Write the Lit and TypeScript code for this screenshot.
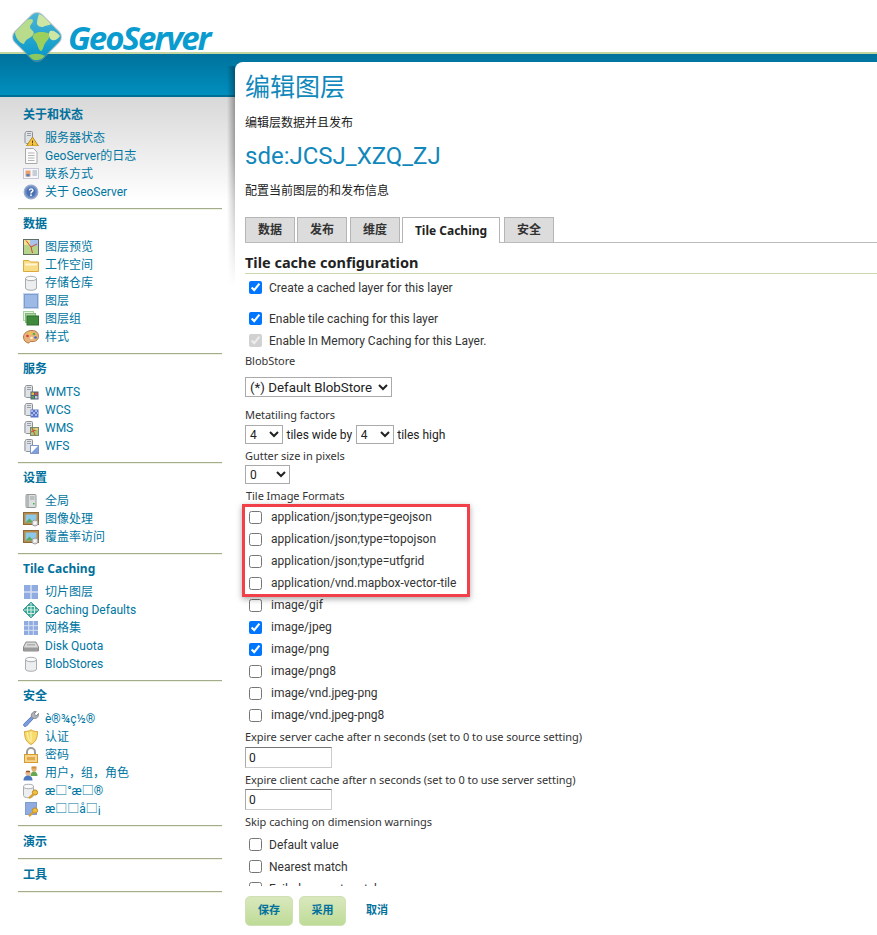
import { LitElement, html, css, svg } from "lit";
import { customElement } from "lit/decorators.js";

const srv = svg`<rect x="2.5" y="1.5" width="7" height="12" rx="1" fill="#dfe2e6" stroke="#8d9196"/><path d="M4 3.5h4M4 5.5h4" stroke="#9aa0a6"/><rect x="1" y="3" width="2" height="10" fill="#b8bcc0"/>`;
const key = svg`<circle cx="12" cy="9.5" r="2.6" fill="#f0c040" stroke="#c08a20"/><path d="M10.5 11L6 15.2" stroke="#d9a02c" stroke-width="2.2"/>`;
const I: Record<string, any> = {
  status: svg`${srv}<path d="M9.500 7l6 9H3.500z" fill="#f5c542" stroke="#b98a25"/><path d="M9.500 10.500v2.800M9.500 14.200v.9" stroke="#5a4210"/>`,
  doc: svg`<path d="M2.500.5h8l3.500 3.500v11.500H2.500z" fill="#fbfbfb" stroke="#a8a8a8"/><path d="M5 5h6.500M5 7.500h6.500M5 10h6.500M5 12.500h6.500" stroke="#b5b5b5"/>`,
  card: svg`<rect x=".5" y="2.500" width="15" height="10" fill="#f7f7fb" stroke="#c4c8d6"/><rect x="2.500" y="4.500" width="5" height="6" fill="#e8a070"/><rect x="3.500" y="8" width="3" height="2.500" fill="#4f7fc0"/><path d="M9.500 5h4.500M9.500 7h4.500M9.500 9h4.500" stroke="#9aa2b4"/>`,
  help: svg`<circle cx="8" cy="8" r="6.800" fill="#6d8fc9" stroke="#97a9cc" stroke-width="1.200"/><circle cx="8" cy="8" r="4.600" fill="#4a70b2"/><path d="M6.300 6.400c.3-2 3.600-2 3.600 0 0 1.300-1.900 1.300-1.900 3" fill="none" stroke="#fff" stroke-width="1.400"/><rect x="7.200" y="10.400" width="1.600" height="1.600" fill="#fff"/>`,
  preview: svg`<rect x=".5" y=".5" width="15" height="15" fill="#b6d48a" stroke="#5f6e62"/><rect x="7" y="1" width="8" height="6" fill="#a8c4ec"/><rect x="1" y="1" width="6" height="5" fill="#f0e090"/><path d="M3 1.500l5 6.500 1.500 6M8 8l6-3" stroke="#d5482c" fill="none"/>`,
  folder: svg`<path d="M.5 3.500h5.500l1.500 1.500h8v9.500H.5z" fill="#f8dc86" stroke="#dba93c"/><path d="M2 6.500h12v2H2z" fill="#fff6d4"/>`,
  db: svg`<path d="M2.500 3.500v9.500c0 3 11 3 11 0V3.500z" fill="#eceef0" stroke="#a9acb0"/><ellipse cx="8" cy="3.500" rx="5.500" ry="2.200" fill="#fafafa" stroke="#a9acb0"/>`,
  layer: svg`<rect x="1.500" y="1.500" width="13" height="13" fill="#9db9e6" stroke="#7f9ccf"/><rect x=".5" y=".5" width="15" height="15" fill="none" stroke="#c5d4ee"/>`,
  group: svg`<rect x=".5" y=".5" width="10" height="9" fill="#e4f2de" stroke="#a9d0a0"/><rect x="2.500" y="2.500" width="10" height="9" fill="#a7d29c" stroke="#85bb7b"/><rect x="4" y="5" width="11.500" height="9" fill="#3f8a3c" stroke="#2e6f2c"/>`,
  style: svg`<path d="M.5 8c0-4 4-6.500 8.500-6.500S15.500 4 15.500 7.500 12 13 9 12.500 7 14.500 5 14 .5 11.500.5 8z" fill="#e8b47c" stroke="#b57a42"/><circle cx="4.500" cy="7" r="1.300" fill="#d83c3c"/><circle cx="7.500" cy="4.500" r="1.300" fill="#f0d030"/><circle cx="11" cy="5" r="1.300" fill="#58b048"/><circle cx="12.500" cy="8.500" r="1.300" fill="#4068c8"/><circle cx="8.500" cy="9" r="1.300" fill="#fff3dc"/>`,
  wmts: svg`${srv}<rect x="7.500" y="7.500" width="8" height="8" fill="#50607c"/><path d="M8.500 8.500h2.500v2.500H8.500z" fill="#d8c040"/><path d="M12 8.500h2.500v2.500H12z" fill="#d85040"/><path d="M8.500 12h2.500v2.500H8.500z" fill="#50a050"/><path d="M12 12h2.500v2.500H12z" fill="#c0c8e0"/>`,
  wcs: svg`${srv}<rect x="7.500" y="7.500" width="8" height="8" fill="#5a74c8"/><path d="M8 8h2v2H8zM12 8h2v2h-2zM10 10h2v2h-2zM14 10h1.500v2H14zM8 12h2v2H8zM12 12h2v2h-2z" fill="#a8b8e8"/>`,
  wms: svg`${srv}<rect x="7.500" y="7.500" width="8" height="8" fill="#a8c878" stroke="#7a8a70"/><path d="M9 8l3 7M8 12l7-3" stroke="#d5482c" fill="none"/><rect x="12" y="8" width="3" height="2" fill="#e8d070"/>`,
  wfs: svg`${srv}<rect x="7.500" y="7.500" width="8" height="8" fill="#fff" stroke="#7f97c8"/><path d="M8 15l7-7v7z" fill="#7f9fdc"/>`,
  global: svg`<rect x="3" y="1.500" width="10" height="13" rx="1" fill="#dcdfe0" stroke="#949899"/><rect x="3" y="2" width="3" height="12" fill="#b4b8b8"/><path d="M7 4h4.500M7 6h4.500" stroke="#9aa0a0"/><rect x="10" y="10" width="1.500" height="1.500" fill="#3eae4a"/>`,
  image: svg`<rect x=".5" y="1.500" width="15" height="12" fill="#b88a4c" stroke="#8f6a38"/><rect x="2.500" y="3.500" width="11" height="8" fill="#8cc8e8"/><path d="M2.500 11.500l4-4 3 3 2-1.500 2 2.500z" fill="#5ca85c"/><circle cx="12" cy="12" r="3" fill="#e4e4e4" stroke="#a0a0a0"/><circle cx="12" cy="12" r="1" fill="#fff"/>`,
  tiles: svg`<rect x="1" y="1" width="14" height="14" fill="#8fabe0"/><path d="M8 1v14M1 8h14" stroke="#d6e0f4" stroke-width="1.500"/>`,
  defaults: svg`<path d="M8 .2L15.800 8 8 15.800.2 8z" fill="#3aa8a0" stroke="#1d8a88"/><path d="M8 1v14M1 8h14M4.500 4.500v7M11.500 4.500v7M4.500 4.500h7M4.500 11.500h7" stroke="#d8f0d8"/>`,
  grid: svg`<rect x="1" y="1" width="14" height="14" fill="#8fabe0"/><path d="M5.700 1v14M10.300 1v14M1 5.700h14M1 10.300h14" stroke="#d6e0f4"/>`,
  disk: svg`<path d="M3 4h10l2.500 5v4H.5V9z" fill="#dadada" stroke="#8a8a8a"/><rect x="1" y="9.500" width="14" height="3.500" fill="#9a9a9a"/><rect x="4" y="6" width="8" height="1.500" fill="#b0b0b0"/>`,
  wrench: svg`<path d="M.8 13l7.700-7.500 2 2L3 15.500c-1 1-3.200-1.500-2.200-2.500z" fill="#7d9ce0" stroke="#5c7cc0"/><path d="M8.500 6C7.500 3 10 .2 13.200.5l-2 2.500 2 1.800 2.300-2.300c.5 3-2 6-5.500 4.800z" fill="#b0b4b8" stroke="#86898d"/>`,
  shield: svg`<path d="M8 .8c2 1.400 4 1.700 6.500 1.700 0 6-1.500 10.500-6.500 13C3 13 1.500 8.500 1.500 2.500 4 2.500 6 2.200 8 .8z" fill="#f6dc6c" stroke="#d9a43c"/><path d="M8 3v10M4.500 3.500C4.600 8 5.500 11 8 13" stroke="#fff3b8" fill="none"/>`,
  lock: svg`<path d="M4 8V5a4 4 0 018 0v3" fill="none" stroke="#9c9c9c" stroke-width="2"/><rect x="1.500" y="7.500" width="13" height="8" fill="#f6d58c" stroke="#d59a30"/><rect x="4" y="10" width="8" height="3.200" fill="#e2aa50"/>`,
  users: svg`<circle cx="11" cy="4" r="2.600" fill="#eab070"/><path d="M7.500 11c0-3 1.500-4.500 3.500-4.500s3.500 1.500 3.500 4.500z" fill="#68a850"/><path d="M8.500 1.500h5v2h-5z" fill="#c89040"/><circle cx="5" cy="8" r="2.600" fill="#eeb88a"/><path d="M3 5.800h4v1.500H3z" fill="#8a5a34"/><path d="M.5 15.500c0-3.500 2-5 4.500-5s4.500 1.500 4.500 5z" fill="#4c78c0"/>`,
  dbkey: svg`<path d="M.5 3.500v9c0 3 10 3 10 0v-9z" fill="#eceef0" stroke="#a9acb0"/><ellipse cx="5.500" cy="3.500" rx="5" ry="2.200" fill="#fafafa" stroke="#a9acb0"/>${key}`,
  layerkey: svg`<rect x="2.500" y="1.500" width="11" height="12" fill="#8fabe0" stroke="#7f9ccf"/>${key}`,
};

const nav = [
  { t: "关于和状态", items: [["status", "服务器状态"], ["doc", "GeoServer的日志"], ["card", "联系方式"], ["help", "关于 GeoServer"]] },
  { t: "数据", items: [["preview", "图层预览"], ["folder", "工作空间"], ["db", "存储仓库"], ["layer", "图层"], ["group", "图层组"], ["style", "样式"]] },
  { t: "服务", items: [["wmts", "WMTS"], ["wcs", "WCS"], ["wms", "WMS"], ["wfs", "WFS"]] },
  { t: "设置", items: [["global", "全局"], ["image", "图像处理"], ["image", "覆盖率访问"]] },
  { t: "Tile Caching", items: [["tiles", "切片图层"], ["defaults", "Caching Defaults"], ["grid", "网格集"], ["disk", "Disk Quota"], ["db", "BlobStores"]] },
  { t: "安全", items: [["wrench", "è®¾ç½®"], ["shield", "认证"], ["lock", "密码"], ["users", "用户，组，角色"], ["dbkey", "æ□°æ□®"], ["layerkey", "æ□□å□¡"]] },
  { t: "演示", items: [] },
  { t: "工具", items: [] },
];

const formats: [string, boolean][] = [
  ["application/json;type=geojson", false],
  ["application/json;type=topojson", false],
  ["application/json;type=utfgrid", false],
  ["application/vnd.mapbox-vector-tile", false],
  ["image/gif", false],
  ["image/jpeg", true],
  ["image/png", true],
  ["image/png8", false],
  ["image/vnd.jpeg-png", false],
  ["image/vnd.jpeg-png8", false],
];

@customElement("app-root")
export class AppRoot extends LitElement {
  static styles = css`
    :host { display: block; height: 100vh; overflow: hidden; background: #fff; color: #222;
      font: 12px/18px Roboto, "Noto Sans CJK SC", sans-serif; }
    * { box-sizing: border-box; }
    .top { height: 54px; display: flex; align-items: center; padding-left: 12px; border-bottom: 2px solid #c3d5a0; }
    .logo { width: 50px; height: 50px; flex: none; position: relative; z-index: 2; align-self: flex-start; margin-top: 12px; overflow: visible; }
    .brand { font: italic 700 33px/1 "Noto Sans", sans-serif; color: #0a9ccf; margin-left: 6px; letter-spacing: -2px; position: relative; top: 11px; }
    .band { height: 43px; background: linear-gradient(#00719c, #008fbe); border-bottom: 2px solid #006f96; }
    .body { display: grid; grid-template-columns: 235px 1fr; height: calc(100vh - 97px); }
    aside { padding: 2px 13px 0 18px; background: linear-gradient(#d8d8d8, #fff 105px); }
    .sec { padding: 6px 0 8px; border-bottom: 1px solid #a3ad8c; box-shadow: 0 1px 0 #eef1e4; }
    .sec:first-child { padding-top: 7px; }
    .sec h3 { margin: 0 0 4px 5px; font: 700 12px/18px "Noto Sans", "Noto Sans CJK SC", sans-serif; color: #00709c; }
    .sec h3:last-child { margin-top: 1px; margin-bottom: -1px; }
    .item { display: flex; align-items: center; height: 18px; padding: 2px 0 0 5px; color: #0076a1; white-space: nowrap; }
    .item svg { width: 16px; height: 16px; margin-right: 6px; flex: none; }
    main { margin-top: -35px; background: #fff; border-radius: 8px 0 0 0; padding-left: 10px; position: relative;
      display: flex; flex-direction: column; height: calc(100vh - 62px); min-width: 0; }
    main::before { content: ""; position: absolute; left: -8px; top: 4px; width: 8px; height: 220px;
      background: linear-gradient(90deg, transparent, rgba(0,0,0,.32));
      -webkit-mask: linear-gradient(#000 40%, transparent); mask: linear-gradient(#000 40%, transparent); }
    h1, h2 { margin: 0; font-weight: 400; color: #1188bb; white-space: nowrap; }
    h1 { height: 52px; font-size: 25px; line-height: 52px; }
    h2 { height: 52px; font-size: 24px; line-height: 52px; }
    .line { height: 16px; line-height: 18px; color: #222; }
    .tabs { display: flex; margin-top: 19px; height: 26px; border-bottom: 1px solid #bbb; }
    .tab { height: 25px; border: 1px solid #b5b5b5; border-bottom: 0; background: #dcdcdc; font: 700 12px/1 "Noto Sans", "Noto Sans CJK SC", sans-serif; color: #333;
      display: flex; align-items: center; justify-content: center; }
    .tab.on { background: #fff; height: 26px; color: #222; }
    .h { margin: 10px 0 0 0; padding-bottom: 2px; font: 700 14.5px/18px "Noto Sans", sans-serif; color: #222; border-bottom: 1px solid #c9d8ae; }
    .form { flex: 1; min-height: 0; overflow: hidden; }
    .chk { display: flex; align-items: center; height: 22px; padding-left: 4px; gap: 7px; white-space: nowrap; color: #333; }
    .chk input { margin: 0; width: 13px; height: 13px; flex: none; }
    .chk span { margin-top: 2px; }
    .fmt { gap: 9px; }
    .chk.fmt span { margin-top: 0; }
    .lbl { height: 14px; font: 11px/14px "Noto Sans", sans-serif; letter-spacing: -0.05px; white-space: nowrap; color: #333; }
    .in1 { margin-left: 1px; }
    select { border: 1px solid #aaa; background: #fff; color: #222; border-radius: 0; font: 12px Roboto, sans-serif; padding: 0; display: block; }
    .blob { height: 20px; width: 147px; font-size: 13.33px; }
    .inline { display: flex; align-items: center; height: 19px; gap: 3.500px; }
    .n { height: 19px; width: 38px; }
    .g { height: 19px; width: 45px; }
    input[type="text"] { display: block; width: 87px; height: 21px; padding: 0 3px; font: 12px Roboto, sans-serif; color: #222;
      border: 1px solid; border-color: #767676 #ccc #ccc #aaa; background: #fff; }
    .mt2 { margin-top: 2px; } .mt3 { margin-top: 3px; } .mt4 { margin-top: 4px; } .mt5 { margin-top: 5px; } .mt9 { margin-top: 9px; } .mt11 { margin-top: 11px; }
    .foot { height: 49px; flex: none; padding-top: 10px; display: flex; align-items: flex-start; gap: 6px; }
    .btn { height: 30px; border: 1px solid #cfe0b2; border-radius: 5px; background: linear-gradient(#d9e8bd, #bedb97);
      color: #00709c; font-size: 11px; font-weight: 700; display: flex; align-items: center; justify-content: center; }
    .cancel { margin-left: 14px; height: 30px; line-height: 30px; font-size: 11px; color: #00709c; font-weight: 700; }
    .mark { position: absolute; left: 7px; top: 442px; width: 228px; height: 93px; border: 3px solid #f2404a; box-shadow: 0 2px 6px rgba(0,0,0,.35); pointer-events: none; }
  `;

  private logo() {
    return html`<svg class="logo" viewBox="0 0 50 50" aria-hidden="true">
      <defs>
        <clipPath id="dia"><rect x="6" y="6" width="38" height="38" rx="7" transform="rotate(45 25 25)"/></clipPath>
        <linearGradient id="sea" x1="0" y1="0" x2="0" y2="1"><stop offset="0" stop-color="#4fb5d6"/><stop offset="1" stop-color="#0095c8"/></linearGradient>
      </defs>
      <rect x="6" y="6" width="38" height="38" rx="7" transform="rotate(45 25 25)" fill="#bbb" opacity=".5" stroke="#999" stroke-width="2"/>
      <g clip-path="url(#dia)">
        <rect width="50" height="50" fill="url(#sea)"/>
        <path d="M3 20c2-6 10-13 17-13 3 3-2 5-2 8s6 4 3 8-7 3-9 9c-5-1-9-7-9-12z" fill="#b8dc8c"/>
        <path d="M27 2c5 2 10 6 12 10-2 2-6 1-8 3-3 0-6-1-6-4s1-6 2-9z" fill="#cde6a4"/>
        <path d="M22 22c4-3 10-2 14-1 3 2 1 6-2 9s-2 7-5 9c-3-1-3-6-5-9s-5-5-2-8z" fill="#9ccf5c"/>
        <path d="M38 19c3-1 7 1 10 5-2 3-5 5-8 4s-4-7-2-9z" fill="#cde6a4"/>
        <path d="M16 44c4-3 12-3 17 0-3 5-13 6-17 0z" fill="#8cc860"/>
      </g>
    </svg>`;
  }

  private check(label: string, on = false, cls = "", disabled = false) {
    return html`<label class="chk ${cls}"><input type="checkbox" .checked=${on} ?disabled=${disabled} /><span>${label}</span></label>`;
  }

  render() {
    const tabs: [string, number, number, boolean][] = [
      ["数据", 50, 2, false], ["发布", 50, 3, false], ["维度", 50, 2, false], ["Tile Caching", 98, 4, true], ["安全", 50, 0, false],
    ];
    return html`
      <header class="top">${this.logo()}<span class="brand">GeoServer</span></header>
      <div class="band"></div>
      <div class="body">
        <aside>
          ${nav.map((s) => html`<section class="sec"><h3>${s.t}</h3>
            ${s.items.map(([i, t]) => html`<div class="item"><svg viewBox="0 0 16 16" aria-hidden="true">${I[i]}</svg><span>${t}</span></div>`)}
          </section>`)}
        </aside>
        <main>
          <h1>编辑图层</h1>
          <div class="line">编辑层数据并且发布</div>
          <h2>sde:JCSJ_XZQ_ZJ</h2>
          <div class="line">配置当前图层的和发布信息</div>
          <nav class="tabs">
            ${tabs.map(([t, w, m, on]) => html`<div class="tab ${on ? "on" : ""}" style="width:${w}px;margin-right:${m}px">${t}</div>`)}
          </nav>
          <div class="h">Tile cache configuration</div>
          <div class="form">
            <div class="mt2">${this.check("Create a cached layer for this layer", true)}</div>
            <div class="mt9">${this.check("Enable tile caching for this layer", true)}</div>
            ${this.check("Enable In Memory Caching for this Layer.", true, "", true)}
            <div class="lbl mt3">BlobStore</div>
            <select class="blob mt9"><option>(*) Default BlobStore</option></select>
            <div class="lbl mt11">Metatiling factors</div>
            <div class="inline mt3">
              <select class="n"><option>4</option></select><span>tiles wide by</span>
              <select class="n"><option>4</option></select><span>tiles high</span>
            </div>
            <div class="lbl mt5">Gutter size in pixels</div>
            <select class="g mt2"><option>0</option></select>
            <div class="lbl in1 mt5">Tile Image Formats</div>
            <div class="mt3">${formats.map(([t, c]) => this.check(t, c, "fmt"))}</div>
            <div class="lbl mt4">Expire server cache after n seconds (set to 0 to use source setting)</div>
            <input class="mt3" type="text" .value=${"0"} />
            <div class="lbl mt5">Expire client cache after n seconds (set to 0 to use server setting)</div>
            <input class="mt2" type="text" .value=${"0"} />
            <div class="lbl mt5">Skip caching on dimension warnings</div>
            <div class="mt4">
              ${this.check("Default value")}${this.check("Nearest match")}${this.check("Failed nearest match")}
            </div>
          </div>
          <div class="foot">
            <div class="btn" style="width:48px">保存</div>
            <div class="btn" style="width:47px">采用</div>
            <div class="cancel">取消</div>
          </div>
          <div class="mark"></div>
        </main>
      </div>
    `;
  }
}
